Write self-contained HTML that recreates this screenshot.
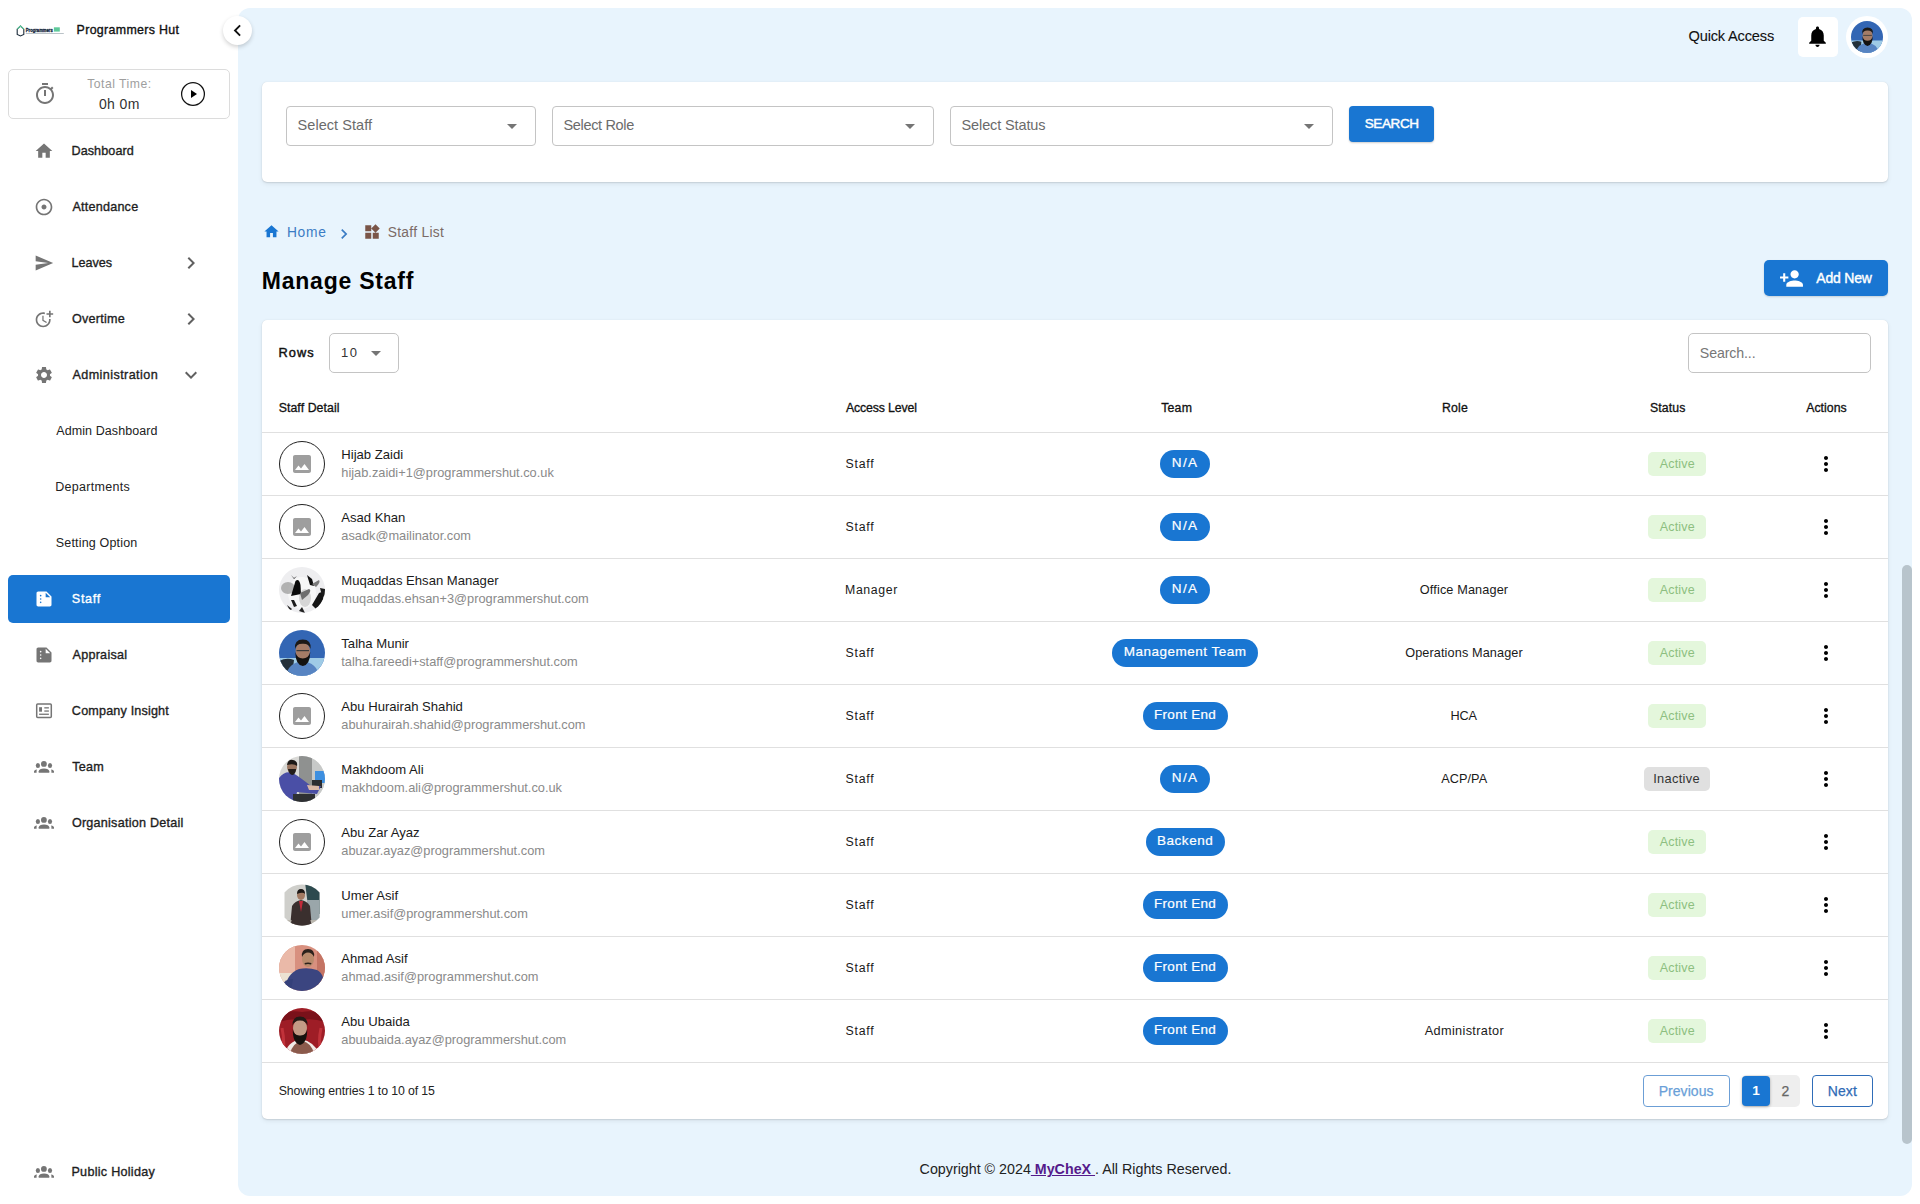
<!DOCTYPE html>
<html><head><meta charset="utf-8">
<style>
*{box-sizing:border-box;margin:0;padding:0}
html,body{width:1920px;height:1204px;overflow:hidden;background:#fff;font-family:"Liberation Sans",sans-serif;color:#1c1c1c}
.a{position:absolute}
svg{display:block}
#main{position:absolute;left:238px;top:8px;width:1674px;height:1188px;background:#e8f4fd;border-radius:12px}
.t{position:absolute;line-height:1;white-space:nowrap}
.av{border-radius:50%}
</style></head><body>
<svg class="a" style="left:16px;top:25px" width="50" height="12" viewBox="0 0 50 12"><path d="M1.2 4.2L4.5 1 7.8 4.2V9.5L4.5 11 1.2 9.5z" fill="none" stroke="#1b2b3a" stroke-width="1.1"/><path d="M1.2 4.2L4.5 1 7.8 4.2" fill="none" stroke="#5fcf9f" stroke-width="1.1"/><text x="9.8" y="6.7" font-family="Liberation Sans" font-weight="700" font-size="6" fill="#14263c" stroke="#14263c" stroke-width=".35" textLength="27" lengthAdjust="spacingAndGlyphs">Programmers</text><rect x="37.9" y="2.3" width="5.9" height="4.3" fill="#5fc99a"/><rect x="9.8" y="8.2" width="38" height=".8" fill="#aab4bb"/></svg>
<div class="t" style="left:76.58px;top:23.50px;font-size:12.4px;font-weight:400;color:#111;letter-spacing:0.334px;-webkit-text-stroke:0.35px #111;">Programmers Hut</div>
<div class="a" style="left:8px;top:69px;width:222px;height:50px;border:1px solid #dcdcdc;border-radius:5px"></div>
<svg class="a" style="left:33px;top:82px" width="24" height="24" viewBox="0 0 24 24"><path fill="#757575" d="M15 1H9v2h6V1zm-4 13h2V8h-2v6zm8.03-6.61l1.42-1.42c-.43-.51-.9-.99-1.41-1.41l-1.42 1.42C16.07 4.74 14.12 4 12 4c-4.97 0-9 4.03-9 9s4.02 9 9 9 9-4.03 9-9c0-2.12-.74-4.07-1.97-5.61zM12 20c-3.87 0-7-3.13-7-7s3.13-7 7-7 7 3.13 7 7-3.13 7-7 7z"/></svg>
<div class="t" style="left:87.23px;top:78.27px;font-size:12.2px;font-weight:400;color:#9e9e9e;letter-spacing:0.489px;">Total Time:</div>
<div class="t" style="left:98.94px;top:96.95px;font-size:14px;font-weight:400;color:#333;letter-spacing:0.388px;">0h 0m</div>
<svg class="a" style="left:180px;top:81px" width="26" height="26" viewBox="0 0 26 26"><circle cx="13" cy="13" r="11.4" fill="none" stroke="#111" stroke-width="1.25"/><path d="M11 9.1v7.8l6-3.9z" fill="#000"/></svg>
<div class="a" style="left:8px;top:575px;width:222px;height:48px;background:#1976d2;border-radius:5px"></div>
<svg class="a" style="left:34px;top:589px" width="20" height="20" viewBox="0 0 24 24"><path fill="#fff" d="M15 3H5c-1.1 0-1.99.9-1.99 2L3 19c0 1.1.89 2 1.99 2H19c1.1 0 2-.9 2-2V9l-6-6zM8 17c-.55 0-1-.45-1-1s.45-1 1-1 1 .45 1 1-.45 1-1 1zm0-4c-.55 0-1-.45-1-1s.45-1 1-1 1 .45 1 1-.45 1-1 1zm0-4c-.55 0-1-.45-1-1s.45-1 1-1 1 .45 1 1-.45 1-1 1zm6 1V4.5l5.5 5.5H14z"/></svg>
<div class="t" style="left:71.83px;top:593.13px;font-size:12.6px;font-weight:400;color:#fff;letter-spacing:0.666px;-webkit-text-stroke:0.35px #fff;">Staff</div>
<svg class="a" style="left:34px;top:141px" width="20" height="20" viewBox="0 0 24 24"><path fill="#757575" d="M10 20v-6h4v6h5v-8h3L12 3 2 12h3v8z"/></svg>
<div class="t" style="left:71.46px;top:145.13px;font-size:12.6px;font-weight:400;color:#1e1e1e;letter-spacing:0.089px;-webkit-text-stroke:0.35px #1e1e1e;">Dashboard</div>
<svg class="a" style="left:34px;top:197px" width="20" height="20" viewBox="0 0 24 24"><path fill="#757575" d="M12 2C6.49 2 2 6.49 2 12s4.49 10 10 10 10-4.49 10-10S17.51 2 12 2zm0 18c-4.41 0-8-3.59-8-8s3.59-8 8-8 8 3.59 8 8-3.59 8-8 8zm3-8c0 1.66-1.34 3-3 3s-3-1.34-3-3 1.34-3 3-3 3 1.34 3 3z"/></svg>
<div class="t" style="left:72.47px;top:201.13px;font-size:12.6px;font-weight:400;color:#1e1e1e;letter-spacing:0.216px;-webkit-text-stroke:0.35px #1e1e1e;">Attendance</div>
<svg class="a" style="left:34px;top:253px" width="20" height="20" viewBox="0 0 24 24"><path fill="#757575" d="M2.01 21L23 12 2.01 3 2 10l15 2-15 2z"/></svg>
<div class="t" style="left:71.46px;top:257.13px;font-size:12.6px;font-weight:400;color:#1e1e1e;letter-spacing:0.009px;-webkit-text-stroke:0.35px #1e1e1e;">Leaves</div>
<svg class="a" style="left:179px;top:251px" width="24" height="24" viewBox="0 0 24 24"><path fill="#616161" d="M10 6L8.59 7.41 13.17 12l-4.58 4.59L10 18l6-6z"/></svg>
<svg class="a" style="left:34px;top:309px" width="20" height="20" viewBox="0 0 24 24"><path fill="#757575" d="M10 8v6l4.7 2.9.8-1.2-4-2.4V8z M17.92 12c.05.33.08.66.08 1 0 3.9-3.1 7-7 7s-7-3.1-7-7 3.1-7 7-7c.7 0 1.37.1 2 .29V4.23c-.64-.15-1.31-.23-2-.23-5 0-9 4-9 9s4 9 9 9 9-4 9-9c0-.34-.02-.67-.06-1h-2.02z M20 5V2h-2v3h-3v2h3v3h2V7h3V5z"/></svg>
<div class="t" style="left:71.90px;top:313.13px;font-size:12.6px;font-weight:400;color:#1e1e1e;letter-spacing:0.249px;-webkit-text-stroke:0.35px #1e1e1e;">Overtime</div>
<svg class="a" style="left:179px;top:307px" width="24" height="24" viewBox="0 0 24 24"><path fill="#616161" d="M10 6L8.59 7.41 13.17 12l-4.58 4.59L10 18l6-6z"/></svg>
<svg class="a" style="left:34px;top:365px" width="20" height="20" viewBox="0 0 24 24"><path fill="#757575" d="M19.14 12.94c.04-.3.06-.61.06-.94 0-.32-.02-.64-.07-.94l2.03-1.58c.18-.14.23-.41.12-.61l-1.92-3.32c-.12-.22-.37-.29-.59-.22l-2.39.96c-.5-.38-1.03-.7-1.62-.94l-.36-2.54c-.04-.24-.24-.41-.48-.41h-3.84c-.24 0-.43.17-.47.41l-.36 2.54c-.59.24-1.13.57-1.62.94l-2.39-.96c-.22-.08-.47 0-.59.22L2.74 8.87c-.12.21-.08.47.12.61l2.03 1.58c-.05.3-.09.63-.09.94s.02.64.07.94l-2.03 1.58c-.18.14-.23.41-.12.61l1.920 3.32c.12.22.37.29.59.22l2.39-.96c.5.38 1.03.7 1.62.94l.36 2.54c.05.24.24.41.48.41h3.84c.24 0 .44-.17.47-.41l.36-2.54c.59-.24 1.13-.56 1.62-.94l2.39.96c.22.08.47 0 .59-.22l1.92-3.32c.12-.22.07-.47-.12-.61l-2.01-1.58zM12 15.6c-1.98 0-3.6-1.62-3.6-3.6s1.62-3.6 3.6-3.6 3.6 1.62 3.6 3.6-1.62 3.6-3.6 3.6z"/></svg>
<div class="t" style="left:72.47px;top:369.13px;font-size:12.6px;font-weight:400;color:#1e1e1e;letter-spacing:0.415px;-webkit-text-stroke:0.35px #1e1e1e;">Administration</div>
<svg class="a" style="left:179px;top:363px" width="24" height="24" viewBox="0 0 24 24"><path fill="#616161" d="M16.59 8.59L12 13.17 7.41 8.59 6 10l6 6 6-6z"/></svg>
<svg class="a" style="left:34px;top:645px" width="20" height="20" viewBox="0 0 24 24"><path fill="#757575" d="M15 3H5c-1.1 0-1.99.9-1.99 2L3 19c0 1.1.89 2 1.99 2H19c1.1 0 2-.9 2-2V9l-6-6zM8 17c-.55 0-1-.45-1-1s.45-1 1-1 1 .45 1 1-.45 1-1 1zm0-4c-.55 0-1-.45-1-1s.45-1 1-1 1 .45 1 1-.45 1-1 1zm0-4c-.55 0-1-.45-1-1s.45-1 1-1 1 .45 1 1-.45 1-1 1zm6 1V4.5l5.5 5.5H14z"/></svg>
<div class="t" style="left:72.47px;top:649.13px;font-size:12.6px;font-weight:400;color:#1e1e1e;letter-spacing:0.261px;-webkit-text-stroke:0.35px #1e1e1e;">Appraisal</div>
<svg class="a" style="left:34px;top:701px" width="20" height="20" viewBox="0 0 20 20"><rect x="2.7" y="3" width="14.6" height="13.4" rx="1" fill="none" stroke="#757575" stroke-width="1.5"/><rect x="5.1" y="6.2" width="2.9" height="4.5" fill="#757575"/><rect x="10.3" y="6.2" width="4.6" height="1.3" fill="#757575"/><rect x="10.3" y="9.4" width="4.6" height="1.3" fill="#757575"/><rect x="5.1" y="12.6" width="9.8" height="1.3" fill="#757575"/></svg>
<div class="t" style="left:71.87px;top:705.13px;font-size:12.6px;font-weight:400;color:#1e1e1e;letter-spacing:0.172px;-webkit-text-stroke:0.35px #1e1e1e;">Company Insight</div>
<svg class="a" style="left:34px;top:757px" width="20" height="20" viewBox="0 0 20 20"><g fill="#757575"><circle cx="9.9" cy="6.9" r="2.9"/><ellipse cx="3.9" cy="8.5" rx="2.1" ry="2.5"/><ellipse cx="16" cy="8.5" rx="2.1" ry="2.5"/><path d="M4.7 15.8v-1.6c0-1.6 2.3-2.8 5.3-2.8s5.3 1.2 5.3 2.8v1.6z"/><path d="M0 15.8v-1.3c0-1 1-1.8 3-2.1-.3.5-.4 1-.4 1.6v1.8z"/><path d="M20 15.8v-1.3c0-1-1-1.8-3-2.1.3.5.4 1 .4 1.6v1.8z"/></g></svg>
<div class="t" style="left:72.22px;top:761.13px;font-size:12.6px;font-weight:400;color:#1e1e1e;letter-spacing:0.265px;-webkit-text-stroke:0.35px #1e1e1e;">Team</div>
<svg class="a" style="left:34px;top:813px" width="20" height="20" viewBox="0 0 20 20"><g fill="#757575"><circle cx="9.9" cy="6.9" r="2.9"/><ellipse cx="3.9" cy="8.5" rx="2.1" ry="2.5"/><ellipse cx="16" cy="8.5" rx="2.1" ry="2.5"/><path d="M4.7 15.8v-1.6c0-1.6 2.3-2.8 5.3-2.8s5.3 1.2 5.3 2.8v1.6z"/><path d="M0 15.8v-1.3c0-1 1-1.8 3-2.1-.3.5-.4 1-.4 1.6v1.8z"/><path d="M20 15.8v-1.3c0-1-1-1.8-3-2.1.3.5.4 1 .4 1.6v1.8z"/></g></svg>
<div class="t" style="left:71.90px;top:817.13px;font-size:12.6px;font-weight:400;color:#1e1e1e;letter-spacing:0.238px;-webkit-text-stroke:0.35px #1e1e1e;">Organisation Detail</div>
<svg class="a" style="left:34px;top:1162px" width="20" height="20" viewBox="0 0 20 20"><g fill="#757575"><circle cx="9.9" cy="6.9" r="2.9"/><ellipse cx="3.9" cy="8.5" rx="2.1" ry="2.5"/><ellipse cx="16" cy="8.5" rx="2.1" ry="2.5"/><path d="M4.7 15.8v-1.6c0-1.6 2.3-2.8 5.3-2.8s5.3 1.2 5.3 2.8v1.6z"/><path d="M0 15.8v-1.3c0-1 1-1.8 3-2.1-.3.5-.4 1-.4 1.6v1.8z"/><path d="M20 15.8v-1.3c0-1-1-1.8-3-2.1.3.5.4 1 .4 1.6v1.8z"/></g></svg>
<div class="t" style="left:71.46px;top:1166.13px;font-size:12.6px;font-weight:400;color:#1e1e1e;letter-spacing:0.271px;-webkit-text-stroke:0.35px #1e1e1e;">Public Holiday</div>
<div class="t" style="left:56.27px;top:425.22px;font-size:12.5px;font-weight:400;color:#222;letter-spacing:0.084px;">Admin Dashboard</div>
<div class="t" style="left:55.27px;top:481.22px;font-size:12.5px;font-weight:400;color:#222;letter-spacing:0.281px;">Departments</div>
<div class="t" style="left:55.74px;top:537.22px;font-size:12.5px;font-weight:400;color:#222;letter-spacing:0.179px;">Setting Option</div>
<!-- MAIN -->
<div id="main"></div>
<div class="t" style="left:1688.56px;top:28.84px;font-size:14.6px;font-weight:400;color:#111;letter-spacing:-0.176px;-webkit-text-stroke:0.1px #111;">Quick Access</div>
<div class="a" style="left:1798px;top:17px;width:40px;height:40px;background:#fff;border-radius:5px"></div>
<svg class="a" style="left:1805px;top:24px" width="25" height="25" viewBox="0 0 24 24"><path fill="#000" d="M12 22c1.1 0 2-.9 2-2h-4c0 1.1.89 2 2 2zm6-6v-5c0-3.07-1.64-5.64-4.5-6.32V4c0-.83-.67-1.5-1.5-1.5s-1.5.67-1.5 1.5v.68C7.63 5.36 6 7.92 6 11v5l-2 2v1h16v-1l-2-2z"/></svg>
<div class="a" style="left:1846px;top:16px;width:42px;height:42px;background:#fff;border-radius:50%"></div>
<svg class="a" style="left:1851px;top:21px" width="32" height="32" viewBox="0 0 46 46"><defs><clipPath id="ctalhatop"><circle cx="23" cy="23" r="23"/></clipPath></defs><g clip-path="url(#ctalhatop)"><rect width="46" height="46" fill="#3366b4"/><rect x="0" y="28" width="46" height="18" fill="#9fcbe6"/><path d="M0 31Q8 27 15 30L13 46H0z" fill="#24303a"/><path d="M7 46Q9 33 23.5 31Q38 33 40 46z" fill="#5784c2"/><ellipse cx="23.8" cy="21" rx="7.2" ry="9" fill="#a57c66"/><path d="M16 19Q15 9.5 23.8 9.5Q32.5 9.5 31.6 19Q30 13.5 23.8 13.8Q17.6 13.5 16 19z" fill="#1c1916"/><path d="M16.3 22Q16.5 35 23.8 36Q31 35 31.3 22Q29.5 28.5 23.8 28.5Q18 28.5 16.3 22z" fill="#141210"/><rect x="17.5" y="20" width="12.5" height="1.2" fill="#3a3a3a"/></g></svg>
<div class="a" style="left:262px;top:82px;width:1626px;height:100px;background:#fff;border-radius:5px;box-shadow:0 2px 5px rgba(0,0,0,.07),0 1px 1.5px rgba(0,0,0,.09),0 0 1px rgba(0,0,0,.12)"></div>
<div class="a" style="left:286px;top:106px;width:250px;height:40px;border:1px solid #c4c4c4;border-radius:4px;background:#fff"></div>
<div class="t" style="left:297.55px;top:118.33px;font-size:14.5px;font-weight:400;color:#6b6b6b;letter-spacing:0.049px;">Select Staff</div>
<svg class="a" style="left:500px;top:114px" width="24" height="24" viewBox="0 0 24 24"><path fill="#757575" d="M7 10l5 5 5-5z"/></svg>
<div class="a" style="left:552px;top:106px;width:382px;height:40px;border:1px solid #c4c4c4;border-radius:4px;background:#fff"></div>
<div class="t" style="left:563.55px;top:118.33px;font-size:14.5px;font-weight:400;color:#6b6b6b;letter-spacing:-0.346px;">Select Role</div>
<svg class="a" style="left:898px;top:114px" width="24" height="24" viewBox="0 0 24 24"><path fill="#757575" d="M7 10l5 5 5-5z"/></svg>
<div class="a" style="left:950px;top:106px;width:383px;height:40px;border:1px solid #c4c4c4;border-radius:4px;background:#fff"></div>
<div class="t" style="left:961.55px;top:118.33px;font-size:14.5px;font-weight:400;color:#6b6b6b;letter-spacing:-0.123px;">Select Status</div>
<svg class="a" style="left:1297px;top:114px" width="24" height="24" viewBox="0 0 24 24"><path fill="#757575" d="M7 10l5 5 5-5z"/></svg>
<div class="a" style="left:1349px;top:106px;width:85px;height:36px;background:#1976d2;border-radius:4px;box-shadow:0 1px 2px rgba(0,0,0,.2)"></div>
<div class="t" style="left:1364.69px;top:117.17px;font-size:13.5px;font-weight:400;color:#fff;letter-spacing:-0.368px;-webkit-text-stroke:0.45px #fff;">SEARCH</div>
<svg class="a" style="left:263px;top:223px" width="17" height="17" viewBox="0 0 24 24"><path fill="#1976d2" d="M10 20v-6h4v6h5v-8h3L12 3 2 12h3v8z"/></svg>
<div class="t" style="left:286.96px;top:226.02px;font-size:13.8px;font-weight:400;color:#3b7cc4;letter-spacing:0.705px;">Home</div>
<svg class="a" style="left:334px;top:224px" width="20" height="20" viewBox="0 0 24 24"><path fill="#3b7cc4" d="M10 6L8.59 7.41 13.17 12l-4.58 4.59L10 18l6-6z"/></svg>
<svg class="a" style="left:363px;top:223px" width="18" height="18" viewBox="0 0 24 24"><path fill="#7a5548" d="M13 13v8h8v-8h-8zM3 21h8v-8H3v8zM3 3v8h8V3H3zm13.66-1.31L11 7.34 16.66 13l5.66-5.66-5.66-5.65z"/></svg>
<div class="t" style="left:387.68px;top:226.02px;font-size:13.8px;font-weight:400;color:#7b6a66;letter-spacing:0.304px;">Staff List</div>
<div class="t" style="left:261.75px;top:270.03px;font-size:23px;font-weight:700;color:#000;letter-spacing:0.780px;">Manage Staff</div>
<div class="a" style="left:1764px;top:260px;width:124px;height:36px;background:#1976d2;border-radius:5px;box-shadow:0 1px 2px rgba(0,0,0,.15)"></div>
<svg class="a" style="left:1779px;top:266px" width="25" height="25" viewBox="0 0 24 24"><path fill="#fff" d="M15 12c2.21 0 4-1.79 4-4s-1.79-4-4-4-4 1.79-4 4 1.79 4 4 4zm-9-2V7H4v3H1v2h3v3h2v-3h3v-2H6zm9 4c-2.67 0-8 1.34-8 4v2h16v-2c0-2.66-5.33-4-8-4z"/></svg>
<div class="t" style="left:1816.37px;top:270.95px;font-size:14px;font-weight:400;color:#fff;letter-spacing:-0.217px;-webkit-text-stroke:0.4px #fff;">Add New</div>
<div class="a" style="left:262px;top:320px;width:1626px;height:799px;background:#fff;border-radius:5px;box-shadow:0 2px 5px rgba(0,0,0,.07),0 1px 1.5px rgba(0,0,0,.09),0 0 1px rgba(0,0,0,.12)"></div>
<div class="t" style="left:278.54px;top:346.66px;font-size:12.8px;font-weight:400;color:#111;letter-spacing:1.035px;-webkit-text-stroke:0.45px #111;">Rows</div>
<div class="a" style="left:329px;top:333px;width:70px;height:40px;border:1px solid #c4c4c4;border-radius:5px"></div>
<div class="t" style="left:341.02px;top:345.80px;font-size:13px;font-weight:400;color:#333;letter-spacing:1.532px;">10</div>
<svg class="a" style="left:364px;top:341px" width="24" height="24" viewBox="0 0 24 24"><path fill="#757575" d="M7 10l5 5 5-5z"/></svg>
<div class="a" style="left:1688px;top:333px;width:183px;height:40px;border:1px solid #c4c4c4;border-radius:5px"></div>
<div class="t" style="left:1699.86px;top:345.68px;font-size:14.2px;font-weight:400;color:#777;letter-spacing:-0.127px;">Search...</div>
<div class="t" style="left:278.65px;top:402.49px;font-size:12.3px;font-weight:400;color:#111;letter-spacing:0.087px;-webkit-text-stroke:0.3px #111;">Staff Detail</div>
<div class="t" style="left:846.07px;top:402.49px;font-size:12.3px;font-weight:400;color:#111;letter-spacing:-0.147px;-webkit-text-stroke:0.3px #111;">Access Level</div>
<div class="t" style="left:1161.22px;top:402.49px;font-size:12.3px;font-weight:400;color:#111;letter-spacing:0.201px;-webkit-text-stroke:0.3px #111;">Team</div>
<div class="t" style="left:1442.09px;top:402.49px;font-size:12.3px;font-weight:400;color:#111;letter-spacing:0.120px;-webkit-text-stroke:0.3px #111;">Role</div>
<div class="t" style="left:1650.05px;top:402.49px;font-size:12.3px;font-weight:400;color:#111;letter-spacing:0.103px;-webkit-text-stroke:0.3px #111;">Status</div>
<div class="t" style="left:1806.22px;top:402.49px;font-size:12.3px;font-weight:400;color:#111;letter-spacing:0.020px;-webkit-text-stroke:0.3px #111;">Actions</div>
<div class="a" style="left:262px;top:432px;width:1626px;height:1px;background:#e0e0e0"></div>
<div class="a" style="left:279px;top:441px;width:46px;height:46px;border:1.6px solid #222;border-radius:50%"></div>
<svg class="a" style="left:290px;top:452px" width="24" height="24" viewBox="0 0 24 24"><path fill="#9e9e9e" d="M21 19V5c0-1.1-.9-2-2-2H5c-1.1 0-2 .9-2 2v14c0 1.1.9 2 2 2h14c1.1 0 2-.9 2-2zM8.5 13.5l2.5 3.01L14.5 12l4.5 6H5l3.5-4.5z"/></svg>
<div class="t" style="left:341.30px;top:448.41px;font-size:13.1px;font-weight:400;color:#1a1a1a;">Hijab Zaidi</div>
<div class="t" style="left:341.30px;top:467.06px;font-size:12.8px;font-weight:400;color:#8a8a8a;">hijab.zaidi+1@programmershut.co.uk</div>
<div class="t" style="left:845.55px;top:457.89px;font-size:12.3px;font-weight:400;color:#1a1a1a;letter-spacing:0.765px;">Staff</div>
<div class="a" style="left:1160.0px;top:450px;width:50px;height:28px;background:#1976d2;border-radius:14px"></div>
<div class="t" style="left:1171.84px;top:455.97px;font-size:13.5px;font-weight:400;color:#fff;letter-spacing:1.368px;-webkit-text-stroke:0.2px #fff;">N/A</div>
<div class="a" style="left:1648px;top:452px;width:58px;height:24px;background:#e4f7dc;border-radius:5px"></div>
<div class="t" style="left:1659.82px;top:458.02px;font-size:12.5px;font-weight:400;color:#8dbf80;letter-spacing:0.166px;">Active</div>
<svg class="a" style="left:1814px;top:452px" width="24" height="24" viewBox="0 0 24 24"><path fill="#000" d="M12 8c1.1 0 2-.9 2-2s-.9-2-2-2-2 .9-2 2 .9 2 2 2zm0 2c-1.1 0-2 .9-2 2s.9 2 2 2 2-.9 2-2-.9-2-2-2zm0 6c-1.1 0-2 .9-2 2s.9 2 2 2 2-.9 2-2-.9-2-2-2z"/></svg>
<div class="a" style="left:262px;top:495px;width:1626px;height:1px;background:#e0e0e0"></div>
<div class="a" style="left:279px;top:504px;width:46px;height:46px;border:1.6px solid #222;border-radius:50%"></div>
<svg class="a" style="left:290px;top:515px" width="24" height="24" viewBox="0 0 24 24"><path fill="#9e9e9e" d="M21 19V5c0-1.1-.9-2-2-2H5c-1.1 0-2 .9-2 2v14c0 1.1.9 2 2 2h14c1.1 0 2-.9 2-2zM8.5 13.5l2.5 3.01L14.5 12l4.5 6H5l3.5-4.5z"/></svg>
<div class="t" style="left:341.30px;top:511.41px;font-size:13.1px;font-weight:400;color:#1a1a1a;">Asad Khan</div>
<div class="t" style="left:341.30px;top:530.06px;font-size:12.8px;font-weight:400;color:#8a8a8a;">asadk@mailinator.com</div>
<div class="t" style="left:845.55px;top:520.89px;font-size:12.3px;font-weight:400;color:#1a1a1a;letter-spacing:0.765px;">Staff</div>
<div class="a" style="left:1160.0px;top:513px;width:50px;height:28px;background:#1976d2;border-radius:14px"></div>
<div class="t" style="left:1171.84px;top:518.97px;font-size:13.5px;font-weight:400;color:#fff;letter-spacing:1.368px;-webkit-text-stroke:0.2px #fff;">N/A</div>
<div class="a" style="left:1648px;top:515px;width:58px;height:24px;background:#e4f7dc;border-radius:5px"></div>
<div class="t" style="left:1659.82px;top:521.02px;font-size:12.5px;font-weight:400;color:#8dbf80;letter-spacing:0.166px;">Active</div>
<svg class="a" style="left:1814px;top:515px" width="24" height="24" viewBox="0 0 24 24"><path fill="#000" d="M12 8c1.1 0 2-.9 2-2s-.9-2-2-2-2 .9-2 2 .9 2 2 2zm0 2c-1.1 0-2 .9-2 2s.9 2 2 2 2-.9 2-2-.9-2-2-2zm0 6c-1.1 0-2 .9-2 2s.9 2 2 2 2-.9 2-2-.9-2-2-2z"/></svg>
<div class="a" style="left:262px;top:558px;width:1626px;height:1px;background:#e0e0e0"></div>
<svg class="a" style="left:279px;top:567px" width="46" height="46" viewBox="0 0 46 46"><defs><clipPath id="cbf"><circle cx="23" cy="23" r="23"/></clipPath></defs><g clip-path="url(#cbf)"><rect width="46" height="46" fill="#eeeef0"/><ellipse cx="23" cy="26" rx="14" ry="16" fill="#f7f7f7"/><ellipse cx="9" cy="21" rx="7" ry="6" fill="#9c9c9c" opacity=".75"/><ellipse cx="26" cy="31" rx="6" ry="9" fill="#c8c8c8" opacity=".7"/><path d="M12 29L16.5 14Q20 11 21.5 18L22 27z" fill="#0b0b0b"/><path d="M21 26L30 22Q33 23 29 28L23 33z" fill="#6e6e6e"/><path d="M28 8L33 12L35 19L31 18z" fill="#101010"/><path d="M33 17L40 13Q42 15 37 20z" fill="#7a7a7a"/><path d="M33 38L40 26Q46 23 44 33L38 43z" fill="#151515"/><path d="M41 21L46 22L46 30L43 29z" fill="#1a1a1a"/><path d="M12 33L15 40L18 39L15 33z" fill="#1c1c1c"/><path d="M12 8L15 12L18 9L15 11z" fill="#333"/><path d="M8 38L11 44L13 42z" fill="#2a2a2a"/><path d="M20 44L23 40L26 46z" fill="#222"/></g></svg>
<div class="t" style="left:341.30px;top:574.41px;font-size:13.1px;font-weight:400;color:#1a1a1a;">Muqaddas Ehsan Manager</div>
<div class="t" style="left:341.30px;top:593.06px;font-size:12.8px;font-weight:400;color:#8a8a8a;">muqaddas.ehsan+3@programmershut.com</div>
<div class="t" style="left:845.09px;top:583.89px;font-size:12.3px;font-weight:400;color:#1a1a1a;letter-spacing:0.607px;">Manager</div>
<div class="a" style="left:1160.0px;top:576px;width:50px;height:28px;background:#1976d2;border-radius:14px"></div>
<div class="t" style="left:1171.84px;top:581.97px;font-size:13.5px;font-weight:400;color:#fff;letter-spacing:1.368px;-webkit-text-stroke:0.2px #fff;">N/A</div>
<div class="t" style="left:1419.85px;top:583.55px;font-size:12.7px;font-weight:400;color:#1a1a1a;letter-spacing:0.132px;">Office Manager</div>
<div class="a" style="left:1648px;top:578px;width:58px;height:24px;background:#e4f7dc;border-radius:5px"></div>
<div class="t" style="left:1659.82px;top:584.02px;font-size:12.5px;font-weight:400;color:#8dbf80;letter-spacing:0.166px;">Active</div>
<svg class="a" style="left:1814px;top:578px" width="24" height="24" viewBox="0 0 24 24"><path fill="#000" d="M12 8c1.1 0 2-.9 2-2s-.9-2-2-2-2 .9-2 2 .9 2 2 2zm0 2c-1.1 0-2 .9-2 2s.9 2 2 2 2-.9 2-2-.9-2-2-2zm0 6c-1.1 0-2 .9-2 2s.9 2 2 2 2-.9 2-2-.9-2-2-2z"/></svg>
<div class="a" style="left:262px;top:621px;width:1626px;height:1px;background:#e0e0e0"></div>
<svg class="a" style="left:279px;top:630px" width="46" height="46" viewBox="0 0 46 46"><defs><clipPath id="ctalha"><circle cx="23" cy="23" r="23"/></clipPath></defs><g clip-path="url(#ctalha)"><rect width="46" height="46" fill="#3366b4"/><rect x="0" y="28" width="46" height="18" fill="#9fcbe6"/><path d="M0 31Q8 27 15 30L13 46H0z" fill="#24303a"/><path d="M7 46Q9 33 23.5 31Q38 33 40 46z" fill="#5784c2"/><ellipse cx="23.8" cy="21" rx="7.2" ry="9" fill="#a57c66"/><path d="M16 19Q15 9.5 23.8 9.5Q32.5 9.5 31.6 19Q30 13.5 23.8 13.8Q17.6 13.5 16 19z" fill="#1c1916"/><path d="M16.3 22Q16.5 35 23.8 36Q31 35 31.3 22Q29.5 28.5 23.8 28.5Q18 28.5 16.3 22z" fill="#141210"/><rect x="17.5" y="20" width="12.5" height="1.2" fill="#3a3a3a"/></g></svg>
<div class="t" style="left:341.30px;top:637.41px;font-size:13.1px;font-weight:400;color:#1a1a1a;">Talha Munir</div>
<div class="t" style="left:341.30px;top:656.06px;font-size:12.8px;font-weight:400;color:#8a8a8a;">talha.fareedi+staff@programmershut.com</div>
<div class="t" style="left:845.55px;top:646.89px;font-size:12.3px;font-weight:400;color:#1a1a1a;letter-spacing:0.765px;">Staff</div>
<div class="a" style="left:1112.0px;top:639px;width:146px;height:28px;background:#1976d2;border-radius:14px"></div>
<div class="t" style="left:1123.84px;top:644.97px;font-size:13.5px;font-weight:400;color:#fff;letter-spacing:0.483px;-webkit-text-stroke:0.2px #fff;">Management Team</div>
<div class="t" style="left:1405.20px;top:646.55px;font-size:12.7px;font-weight:400;color:#1a1a1a;letter-spacing:0.108px;">Operations Manager</div>
<div class="a" style="left:1648px;top:641px;width:58px;height:24px;background:#e4f7dc;border-radius:5px"></div>
<div class="t" style="left:1659.82px;top:647.02px;font-size:12.5px;font-weight:400;color:#8dbf80;letter-spacing:0.166px;">Active</div>
<svg class="a" style="left:1814px;top:641px" width="24" height="24" viewBox="0 0 24 24"><path fill="#000" d="M12 8c1.1 0 2-.9 2-2s-.9-2-2-2-2 .9-2 2 .9 2 2 2zm0 2c-1.1 0-2 .9-2 2s.9 2 2 2 2-.9 2-2-.9-2-2-2zm0 6c-1.1 0-2 .9-2 2s.9 2 2 2 2-.9 2-2-.9-2-2-2z"/></svg>
<div class="a" style="left:262px;top:684px;width:1626px;height:1px;background:#e0e0e0"></div>
<div class="a" style="left:279px;top:693px;width:46px;height:46px;border:1.6px solid #222;border-radius:50%"></div>
<svg class="a" style="left:290px;top:704px" width="24" height="24" viewBox="0 0 24 24"><path fill="#9e9e9e" d="M21 19V5c0-1.1-.9-2-2-2H5c-1.1 0-2 .9-2 2v14c0 1.1.9 2 2 2h14c1.1 0 2-.9 2-2zM8.5 13.5l2.5 3.01L14.5 12l4.5 6H5l3.5-4.5z"/></svg>
<div class="t" style="left:341.30px;top:700.41px;font-size:13.1px;font-weight:400;color:#1a1a1a;">Abu Hurairah Shahid</div>
<div class="t" style="left:341.30px;top:719.06px;font-size:12.8px;font-weight:400;color:#8a8a8a;">abuhurairah.shahid@programmershut.com</div>
<div class="t" style="left:845.55px;top:709.89px;font-size:12.3px;font-weight:400;color:#1a1a1a;letter-spacing:0.765px;">Staff</div>
<div class="a" style="left:1142.5px;top:702px;width:85px;height:28px;background:#1976d2;border-radius:14px"></div>
<div class="t" style="left:1153.94px;top:707.97px;font-size:13.5px;font-weight:400;color:#fff;letter-spacing:0.324px;-webkit-text-stroke:0.2px #fff;">Front End</div>
<div class="t" style="left:1450.40px;top:709.55px;font-size:12.7px;font-weight:400;color:#1a1a1a;letter-spacing:-0.125px;">HCA</div>
<div class="a" style="left:1648px;top:704px;width:58px;height:24px;background:#e4f7dc;border-radius:5px"></div>
<div class="t" style="left:1659.82px;top:710.02px;font-size:12.5px;font-weight:400;color:#8dbf80;letter-spacing:0.166px;">Active</div>
<svg class="a" style="left:1814px;top:704px" width="24" height="24" viewBox="0 0 24 24"><path fill="#000" d="M12 8c1.1 0 2-.9 2-2s-.9-2-2-2-2 .9-2 2 .9 2 2 2zm0 2c-1.1 0-2 .9-2 2s.9 2 2 2 2-.9 2-2-.9-2-2-2zm0 6c-1.1 0-2 .9-2 2s.9 2 2 2 2-.9 2-2-.9-2-2-2z"/></svg>
<div class="a" style="left:262px;top:747px;width:1626px;height:1px;background:#e0e0e0"></div>
<svg class="a" style="left:279px;top:756px" width="46" height="46" viewBox="0 0 46 46"><defs><clipPath id="cmak"><circle cx="23" cy="23" r="23"/></clipPath></defs><g clip-path="url(#cmak)"><rect width="46" height="46" fill="#d9d9d6"/><rect x="20" y="0" width="13" height="46" fill="#8f9190"/><rect x="33" y="0" width="13" height="46" fill="#c7c9c8"/><rect x="36" y="15" width="10" height="12" fill="#3d8fe0"/><rect x="33" y="24" width="10" height="8" fill="#2a2c30"/><path d="M0 22Q6 14 14 17Q22 22 32 30L42 30L38 38L18 36L16 46H0z" fill="#4a4fa6"/><ellipse cx="13" cy="11" rx="5" ry="6" fill="#9a7560"/><path d="M8 9Q9 3 14 4Q19 5 18 10Q15 7 8 9z" fill="#1e1a18"/><path d="M9 13Q10 19 14 19Q17 17 17 13z" fill="#231d1a"/><rect x="14" y="38" width="22" height="8" fill="#2e3033"/><path d="M28 29L40 30L40 34L30 34z" fill="#d9b8a6"/></g></svg>
<div class="t" style="left:341.30px;top:763.41px;font-size:13.1px;font-weight:400;color:#1a1a1a;">Makhdoom Ali</div>
<div class="t" style="left:341.30px;top:782.06px;font-size:12.8px;font-weight:400;color:#8a8a8a;">makhdoom.ali@programmershut.co.uk</div>
<div class="t" style="left:845.55px;top:772.89px;font-size:12.3px;font-weight:400;color:#1a1a1a;letter-spacing:0.765px;">Staff</div>
<div class="a" style="left:1160.0px;top:765px;width:50px;height:28px;background:#1976d2;border-radius:14px"></div>
<div class="t" style="left:1171.84px;top:770.97px;font-size:13.5px;font-weight:400;color:#fff;letter-spacing:1.368px;-webkit-text-stroke:0.2px #fff;">N/A</div>
<div class="t" style="left:1441.17px;top:772.55px;font-size:12.7px;font-weight:400;color:#1a1a1a;letter-spacing:0.081px;">ACP/PA</div>
<div class="a" style="left:1644px;top:767px;width:66px;height:24px;background:#e0e0e0;border-radius:5px"></div>
<div class="t" style="left:1653.22px;top:772.76px;font-size:12.8px;font-weight:400;color:#333;letter-spacing:0.319px;">Inactive</div>
<svg class="a" style="left:1814px;top:767px" width="24" height="24" viewBox="0 0 24 24"><path fill="#000" d="M12 8c1.1 0 2-.9 2-2s-.9-2-2-2-2 .9-2 2 .9 2 2 2zm0 2c-1.1 0-2 .9-2 2s.9 2 2 2 2-.9 2-2-.9-2-2-2zm0 6c-1.1 0-2 .9-2 2s.9 2 2 2 2-.9 2-2-.9-2-2-2z"/></svg>
<div class="a" style="left:262px;top:810px;width:1626px;height:1px;background:#e0e0e0"></div>
<div class="a" style="left:279px;top:819px;width:46px;height:46px;border:1.6px solid #222;border-radius:50%"></div>
<svg class="a" style="left:290px;top:830px" width="24" height="24" viewBox="0 0 24 24"><path fill="#9e9e9e" d="M21 19V5c0-1.1-.9-2-2-2H5c-1.1 0-2 .9-2 2v14c0 1.1.9 2 2 2h14c1.1 0 2-.9 2-2zM8.5 13.5l2.5 3.01L14.5 12l4.5 6H5l3.5-4.5z"/></svg>
<div class="t" style="left:341.30px;top:826.41px;font-size:13.1px;font-weight:400;color:#1a1a1a;">Abu Zar Ayaz</div>
<div class="t" style="left:341.30px;top:845.06px;font-size:12.8px;font-weight:400;color:#8a8a8a;">abuzar.ayaz@programmershut.com</div>
<div class="t" style="left:845.55px;top:835.89px;font-size:12.3px;font-weight:400;color:#1a1a1a;letter-spacing:0.765px;">Staff</div>
<div class="a" style="left:1145.5px;top:828px;width:79px;height:28px;background:#1976d2;border-radius:14px"></div>
<div class="t" style="left:1156.89px;top:833.97px;font-size:13.5px;font-weight:400;color:#fff;letter-spacing:0.574px;-webkit-text-stroke:0.2px #fff;">Backend</div>
<div class="a" style="left:1648px;top:830px;width:58px;height:24px;background:#e4f7dc;border-radius:5px"></div>
<div class="t" style="left:1659.82px;top:836.02px;font-size:12.5px;font-weight:400;color:#8dbf80;letter-spacing:0.166px;">Active</div>
<svg class="a" style="left:1814px;top:830px" width="24" height="24" viewBox="0 0 24 24"><path fill="#000" d="M12 8c1.1 0 2-.9 2-2s-.9-2-2-2-2 .9-2 2 .9 2 2 2zm0 2c-1.1 0-2 .9-2 2s.9 2 2 2 2-.9 2-2-.9-2-2-2zm0 6c-1.1 0-2 .9-2 2s.9 2 2 2 2-.9 2-2-.9-2-2-2z"/></svg>
<div class="a" style="left:262px;top:873px;width:1626px;height:1px;background:#e0e0e0"></div>
<svg class="a" style="left:279px;top:882px" width="46" height="46" viewBox="0 0 46 46"><defs><clipPath id="cumer"><path d="M5.5 10.5A23 23 0 0 1 40.5 10.5V35.5A23 23 0 0 1 5.5 35.5z"/></clipPath></defs><g clip-path="url(#cumer)"><rect width="46" height="46" fill="#cfcfcb"/><path d="M26 0H46V32H30z" fill="#2d4a4e"/><rect x="28" y="18" width="14" height="20" fill="#9aa6aa"/><path d="M11 46L13 24Q16 19 22 18Q28 19 31 24L33 46z" fill="#3a2f2e"/><path d="M20 19L22 30L24 19z" fill="#c22a3a"/><ellipse cx="22" cy="13" rx="4" ry="5" fill="#a27a62"/><path d="M18 12Q18 7 22 7Q26 7 26 12Q24 9.5 18 12z" fill="#1c1816"/><rect x="5" y="38" width="36" height="8" fill="#b9b5ad"/><path d="M11 46L13 36H31L33 46z" fill="#3a2f2e"/></g></svg>
<div class="t" style="left:341.30px;top:889.41px;font-size:13.1px;font-weight:400;color:#1a1a1a;">Umer Asif</div>
<div class="t" style="left:341.30px;top:908.06px;font-size:12.8px;font-weight:400;color:#8a8a8a;">umer.asif@programmershut.com</div>
<div class="t" style="left:845.55px;top:898.89px;font-size:12.3px;font-weight:400;color:#1a1a1a;letter-spacing:0.765px;">Staff</div>
<div class="a" style="left:1142.5px;top:891px;width:85px;height:28px;background:#1976d2;border-radius:14px"></div>
<div class="t" style="left:1153.94px;top:896.97px;font-size:13.5px;font-weight:400;color:#fff;letter-spacing:0.324px;-webkit-text-stroke:0.2px #fff;">Front End</div>
<div class="a" style="left:1648px;top:893px;width:58px;height:24px;background:#e4f7dc;border-radius:5px"></div>
<div class="t" style="left:1659.82px;top:899.02px;font-size:12.5px;font-weight:400;color:#8dbf80;letter-spacing:0.166px;">Active</div>
<svg class="a" style="left:1814px;top:893px" width="24" height="24" viewBox="0 0 24 24"><path fill="#000" d="M12 8c1.1 0 2-.9 2-2s-.9-2-2-2-2 .9-2 2 .9 2 2 2zm0 2c-1.1 0-2 .9-2 2s.9 2 2 2 2-.9 2-2-.9-2-2-2zm0 6c-1.1 0-2 .9-2 2s.9 2 2 2 2-.9 2-2-.9-2-2-2z"/></svg>
<div class="a" style="left:262px;top:936px;width:1626px;height:1px;background:#e0e0e0"></div>
<svg class="a" style="left:279px;top:945px" width="46" height="46" viewBox="0 0 46 46"><defs><clipPath id="cahmad"><circle cx="23" cy="23" r="23"/></clipPath></defs><g clip-path="url(#cahmad)"><rect width="46" height="46" fill="#d8907f"/><rect x="0" y="0" width="16" height="28" fill="#eab9a8"/><rect x="38" y="0" width="8" height="46" fill="#c47464"/><path d="M0 28H14L4 46H0z" fill="#ece2d2"/><path d="M5 46Q8 28 20 24Q29 22 38 25Q46 29 46 46z" fill="#3b4580"/><path d="M2 40Q8 33 14 34L12 46H2z" fill="#34407a"/><ellipse cx="29" cy="14" rx="6" ry="8" fill="#b98b6d"/><path d="M23 12Q22 4 29 4Q36 4 35 12Q33 7.5 29 7.5Q25 7.5 23 12z" fill="#2b211c"/><path d="M25.5 18Q29 17 32.5 18L32 19.5Q29 18.7 26 19.5z" fill="#2b211c"/></g></svg>
<div class="t" style="left:341.30px;top:952.41px;font-size:13.1px;font-weight:400;color:#1a1a1a;">Ahmad Asif</div>
<div class="t" style="left:341.30px;top:971.06px;font-size:12.8px;font-weight:400;color:#8a8a8a;">ahmad.asif@programmershut.com</div>
<div class="t" style="left:845.55px;top:961.89px;font-size:12.3px;font-weight:400;color:#1a1a1a;letter-spacing:0.765px;">Staff</div>
<div class="a" style="left:1142.5px;top:954px;width:85px;height:28px;background:#1976d2;border-radius:14px"></div>
<div class="t" style="left:1153.94px;top:959.97px;font-size:13.5px;font-weight:400;color:#fff;letter-spacing:0.324px;-webkit-text-stroke:0.2px #fff;">Front End</div>
<div class="a" style="left:1648px;top:956px;width:58px;height:24px;background:#e4f7dc;border-radius:5px"></div>
<div class="t" style="left:1659.82px;top:962.02px;font-size:12.5px;font-weight:400;color:#8dbf80;letter-spacing:0.166px;">Active</div>
<svg class="a" style="left:1814px;top:956px" width="24" height="24" viewBox="0 0 24 24"><path fill="#000" d="M12 8c1.1 0 2-.9 2-2s-.9-2-2-2-2 .9-2 2 .9 2 2 2zm0 2c-1.1 0-2 .9-2 2s.9 2 2 2 2-.9 2-2-.9-2-2-2zm0 6c-1.1 0-2 .9-2 2s.9 2 2 2 2-.9 2-2-.9-2-2-2z"/></svg>
<div class="a" style="left:262px;top:999px;width:1626px;height:1px;background:#e0e0e0"></div>
<svg class="a" style="left:279px;top:1008px" width="46" height="46" viewBox="0 0 46 46"><defs><clipPath id="cubaida"><circle cx="23" cy="23" r="23"/></clipPath></defs><g clip-path="url(#cubaida)"><rect width="46" height="46" fill="#9e1d26"/><path d="M0 6Q12 2 23 4Q34 2 46 6V14Q34 10 23 12Q12 10 0 14z" fill="#7a111a"/><path d="M3 20Q6 34 4 46" stroke="#c1323a" stroke-width="3" fill="none"/><path d="M42 20Q39 34 42 46" stroke="#c1323a" stroke-width="3" fill="none"/><path d="M6 46Q8 34 22 31Q36 34 40 46z" fill="#f1ece8"/><path d="M11 46Q13 35 23 33Q33 35 35 46z" fill="#8b5a4c"/><ellipse cx="21" cy="20" rx="7" ry="8.5" fill="#c39b86"/><path d="M13.5 18Q13 8.5 21 8.5Q29 8.5 28.5 18Q27 12.5 21 12.5Q15 12.5 13.5 18z" fill="#231a16"/><path d="M13.8 21Q13.5 35 21 37Q28.5 35 28.2 21Q27 28 21 27.5Q15 28 13.8 21z" fill="#16110e"/></g></svg>
<div class="t" style="left:341.30px;top:1015.41px;font-size:13.1px;font-weight:400;color:#1a1a1a;">Abu Ubaida</div>
<div class="t" style="left:341.30px;top:1034.06px;font-size:12.8px;font-weight:400;color:#8a8a8a;">abuubaida.ayaz@programmershut.com</div>
<div class="t" style="left:845.55px;top:1024.89px;font-size:12.3px;font-weight:400;color:#1a1a1a;letter-spacing:0.765px;">Staff</div>
<div class="a" style="left:1142.5px;top:1017px;width:85px;height:28px;background:#1976d2;border-radius:14px"></div>
<div class="t" style="left:1153.94px;top:1022.97px;font-size:13.5px;font-weight:400;color:#fff;letter-spacing:0.324px;-webkit-text-stroke:0.2px #fff;">Front End</div>
<div class="t" style="left:1424.82px;top:1024.55px;font-size:12.7px;font-weight:400;color:#1a1a1a;letter-spacing:0.343px;">Administrator</div>
<div class="a" style="left:1648px;top:1019px;width:58px;height:24px;background:#e4f7dc;border-radius:5px"></div>
<div class="t" style="left:1659.82px;top:1025.02px;font-size:12.5px;font-weight:400;color:#8dbf80;letter-spacing:0.166px;">Active</div>
<svg class="a" style="left:1814px;top:1019px" width="24" height="24" viewBox="0 0 24 24"><path fill="#000" d="M12 8c1.1 0 2-.9 2-2s-.9-2-2-2-2 .9-2 2 .9 2 2 2zm0 2c-1.1 0-2 .9-2 2s.9 2 2 2 2-.9 2-2-.9-2-2-2zm0 6c-1.1 0-2 .9-2 2s.9 2 2 2 2-.9 2-2-.9-2-2-2z"/></svg>
<div class="a" style="left:262px;top:1062px;width:1626px;height:1px;background:#e0e0e0"></div>
<div class="t" style="left:278.65px;top:1085.19px;font-size:12.3px;font-weight:400;color:#222;letter-spacing:-0.110px;">Showing entries 1 to 10 of 15</div>
<div class="a" style="left:1643px;top:1075px;width:87px;height:32px;border:1px solid #6c9fd6;border-radius:4px"></div>
<div class="t" style="left:1658.64px;top:1083.55px;font-size:14px;font-weight:400;color:#6a9fd8;letter-spacing:0.069px;-webkit-text-stroke:0.25px #6a9fd8;">Previous</div>
<div class="a" style="left:1742px;top:1075px;width:58px;height:32px;background:#eeeeee;border-radius:5px"></div>
<div class="a" style="left:1742px;top:1076px;width:28px;height:30px;background:#1976d2;border-radius:4px;box-shadow:0 1px 3px rgba(0,0,0,.3)"></div>
<div class="t" style="left:1456.00px;top:1083.89px;width:600px;text-align:center;font-size:13.6px;font-weight:700;color:#fff;">1</div>
<div class="t" style="left:1485.50px;top:1083.55px;width:600px;text-align:center;font-size:14px;font-weight:400;color:#666;-webkit-text-stroke:0.25px #666;">2</div>
<div class="a" style="left:1812px;top:1075px;width:61px;height:32px;border:1px solid #2f6db8;border-radius:4px"></div>
<div class="t" style="left:1827.64px;top:1083.55px;font-size:14px;font-weight:400;color:#2f6bb6;letter-spacing:0.163px;-webkit-text-stroke:0.25px #2f6bb6;">Next</div>
<div class="t" style="left:919.60px;top:1162.47px;font-size:14.27px;font-weight:400;color:#222;">Copyright © 2024<a style="color:#551a8b;font-weight:700;text-decoration:underline"> MyCheX </a>. All Rights Reserved.</div>
<div class="a" style="left:1902px;top:565px;width:10px;height:579px;background:#b8c4cc;border-radius:5px"></div>
<div class="a" style="left:223px;top:16px;width:29px;height:29px;border-radius:50%;background:#fff;box-shadow:0 2px 4px rgba(0,0,0,.18)"><svg class="a" style="left:3px;top:3px" width="23" height="23" viewBox="0 0 24 24"><path d="M15.41 7.41L14 6l-6 6 6 6 1.41-1.41L10.83 12z" fill="#111"/></svg></div>
</body></html>
